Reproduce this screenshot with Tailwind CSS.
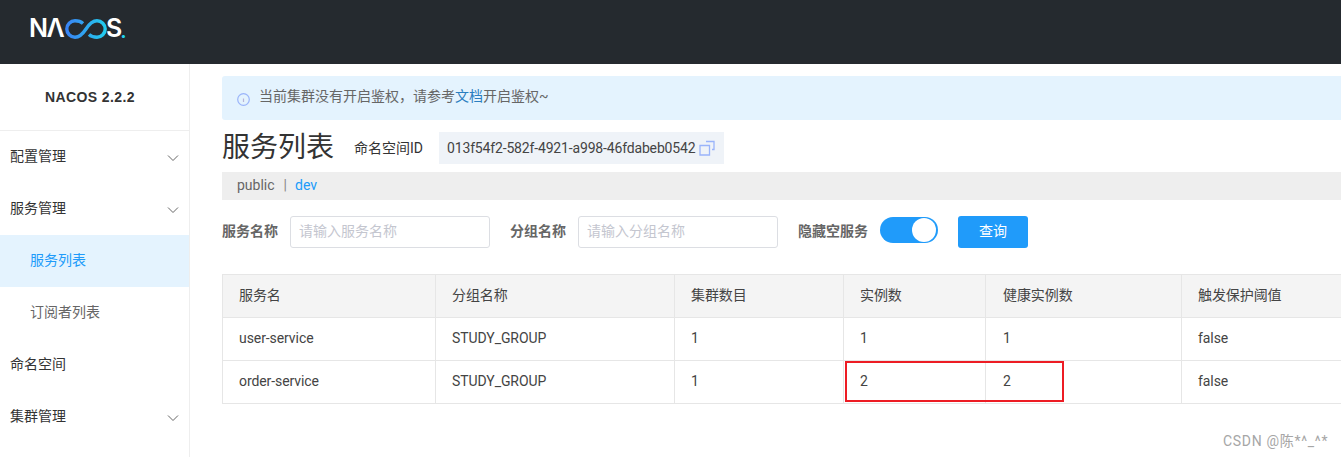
<!DOCTYPE html>
<html lang="zh-CN">
<head>
<meta charset="UTF-8" />
<title>Nacos</title>
<script src="https://cdn.jsdelivr.net/npm/@tailwindcss/browser@4"></script>
</head>
<body class="relative w-[1341px] h-[457px] overflow-hidden bg-white font-['Roboto','Noto_Sans_CJK_SC',sans-serif] text-[14px] text-[#333]">
  <!-- header -->
  <header class="h-16 bg-[#252a2f] flex items-center pl-[29px] pb-[7px]">
    <div class="flex items-center font-['Inter',sans-serif] font-semibold text-white text-[25px] leading-none" aria-label="NACOS">
      <span class="tracking-[-1.6px]">NΛ</span>
      <svg class="w-[44px] h-[20px] ml-[1px] -mr-[2px]" viewBox="0 0 44 20" fill="none">
        <defs>
          <linearGradient id="logoGrad" gradientUnits="userSpaceOnUse" x1="0" x2="44" y1="0" y2="0">
            <stop offset="0" stop-color="#3b7ff5" />
            <stop offset="0.5" stop-color="#2fa8f0" />
            <stop offset="1" stop-color="#1fd0ee" />
          </linearGradient>
        </defs>
        <path d="M19 4.500C17.200 2.800 14.500 1.800 11 1.800a8.200 8.200 0 0 0 0 16.400c4.800 0 7.600-3 11-8.200s6.200-8.200 11-8.200a8.200 8.200 0 0 1 0 16.400c-3.500 0-6.200-1-8-2.700" stroke="url(#logoGrad)" stroke-width="3.400" />
      </svg>
      <span>S</span>
      <span class="text-[#22d3ee] text-[20px] self-end -ml-[2px]">.</span>
    </div>
  </header>

  <div class="flex h-[393px]">
    <!-- sidebar -->
    <aside class="w-[190px] shrink-0 border-r border-[#eeeeee]">
      <div class="h-[67px] flex items-center justify-center pr-[9px] border-b border-[#eeeeee] font-bold text-[#333] tracking-[0.4px] font-['Liberation_Sans','Noto_Sans_CJK_SC',sans-serif]">NACOS 2.2.2</div>
      <nav>
        <div class="h-[52px] pl-2.5 pr-[10px] pb-[2px] flex items-center justify-between">
          <span>配置管理</span>
          <svg class="w-3 h-3 mt-1 text-[#666]" viewBox="0 0 12 12" fill="none" stroke="currentColor"><path d="M1 3.500 6 8.500l5-5" /></svg>
        </div>
        <div class="h-[52px] pl-2.5 pr-[10px] pb-[2px] flex items-center justify-between">
          <span>服务管理</span>
          <svg class="w-3 h-3 mt-1 text-[#666]" viewBox="0 0 12 12" fill="none" stroke="currentColor"><path d="M1 3.500 6 8.500l5-5" /></svg>
        </div>
        <div class="h-[52px] pl-[30px] pb-[2px] flex items-center bg-[#e4f3fe] text-[#209bfa]">服务列表</div>
        <div class="h-[52px] pl-[30px] pb-[2px] flex items-center text-[#666]">订阅者列表</div>
        <div class="h-[52px] pl-2.5 pb-[2px] flex items-center">命名空间</div>
        <div class="h-[52px] pl-2.5 pr-[10px] pb-[2px] flex items-center justify-between">
          <span>集群管理</span>
          <svg class="w-3 h-3 mt-1 text-[#666]" viewBox="0 0 12 12" fill="none" stroke="currentColor"><path d="M1 3.500 6 8.500l5-5" /></svg>
        </div>
      </nav>
    </aside>

    <!-- main -->
    <main class="flex-1 min-w-0 pl-8 pt-3">
      <div class="h-11 bg-[#e4f3fe] rounded-l-[3px] flex items-center pl-[15px] text-[#666]">
        <svg class="w-[13px] h-[13px] mr-[9px] mt-0.5 text-[#9ab4fa]" viewBox="0 0 13 13" fill="none" stroke="currentColor" stroke-width="1.200"><circle cx="6.500" cy="6.500" r="5.800" /><path d="M6.500 5.500v3.500" stroke="#b9b3d8" /></svg>
        <span class="pb-[3px]">当前集群没有开启鉴权，请参考<span class="text-[#2a7ec0]">文档</span>开启鉴权~</span>
      </div>

      <div class="flex items-center mt-3 h-8">
        <h1 class="text-[28px] leading-8 font-normal text-[#333]">服务列表</h1>
        <span class="ml-5 text-[#333]">命名空间ID</span>
        <div class="ml-4 h-8 w-[285px] bg-[#eff3f8] flex items-center pl-2 text-[#444]">
          <span class="tracking-[-0.16px]">013f54f2-582f-4921-a998-46fdabeb0542</span>
          <svg class="w-4 h-4 ml-1 -mt-[1px] text-[#9ab4fa]" viewBox="0 0 16 16" fill="none" stroke="currentColor" stroke-width="1.300"><path d="M1 5.500h9.500V15H1z" /><path d="M7 1.500h8v8h-2" /></svg>
        </div>
      </div>

      <div class="mt-2 h-7 pb-[2px] bg-[#eeeeee] flex items-center pl-[15px] text-[#666]">
        <span>public</span>
        <span class="mx-[9px] text-[#888]">|</span>
        <span class="text-[#209bfa] -ml-[1px]">dev</span>
      </div>

      <form class="mt-4 h-8 flex items-center">
        <label class="font-bold text-[#666] w-[68px] pb-[2px]">服务名称</label>
        <input class="w-[200px] h-8 border border-[#dcdee3] rounded-[3px] px-2 pb-[2px] text-[14px] placeholder:text-[#c4c6cf]" placeholder="请输入服务名称" />
        <label class="font-bold text-[#666] ml-5 w-[68px] pb-[2px]">分组名称</label>
        <input class="w-[200px] h-8 border border-[#dcdee3] rounded-[3px] px-2 pb-[2px] text-[14px] placeholder:text-[#c4c6cf]" placeholder="请输入分组名称" />
        <label class="font-bold text-[#666] ml-5 w-[82px] pb-[2px]">隐藏空服务</label>
        <div class="w-[58px] h-[26px] mb-1 rounded-full bg-[#209bfa] flex items-center justify-end pr-[2px]">
          <div class="w-6 h-6 rounded-full bg-white"></div>
        </div>
        <button type="button" class="ml-5 w-[70px] h-8 pb-[2px] rounded-[3px] bg-[#209bfa] text-white">查询</button>
      </form>

      <table class="mt-[26px] w-[1140px] table-fixed border-collapse text-[#444] tracking-[-0.08px]">
        <colgroup>
          <col class="w-[213px]" /><col class="w-[239px]" /><col class="w-[169px]" /><col class="w-[142px]" /><col class="w-[196px]" /><col class="w-[181px]" />
        </colgroup>
        <thead>
          <tr class="h-[43px] bg-[#f4f4f4]">
            <th class="border border-[#e6e6e6] pl-4 pb-[2px] text-left font-normal">服务名</th>
            <th class="border border-[#e6e6e6] pl-4 pb-[2px] text-left font-normal">分组名称</th>
            <th class="border border-[#e6e6e6] pl-4 pb-[2px] text-left font-normal">集群数目</th>
            <th class="border border-[#e6e6e6] pl-4 pb-[2px] text-left font-normal">实例数</th>
            <th class="border border-[#e6e6e6] pl-[17px] pb-[2px] text-left font-normal">健康实例数</th>
            <th class="border border-[#e6e6e6] pl-4 pb-[2px] text-left font-normal">触发保护阈值</th>
          </tr>
        </thead>
        <tbody>
          <tr class="h-[43px]">
            <td class="border border-[#e6e6e6] pl-4 pb-[2px]">user-service</td>
            <td class="border border-[#e6e6e6] pl-4 pb-[2px]">STUDY_GROUP</td>
            <td class="border border-[#e6e6e6] pl-4 pb-[2px]">1</td>
            <td class="border border-[#e6e6e6] pl-4 pb-[2px]">1</td>
            <td class="border border-[#e6e6e6] pl-[17px] pb-[2px]">1</td>
            <td class="border border-[#e6e6e6] pl-4 pb-[2px]">false</td>
          </tr>
          <tr class="h-[43px]">
            <td class="border border-[#e6e6e6] pl-4 pb-[2px]">order-service</td>
            <td class="border border-[#e6e6e6] pl-4 pb-[2px]">STUDY_GROUP</td>
            <td class="border border-[#e6e6e6] pl-4 pb-[2px]">1</td>
            <td class="border border-[#e6e6e6] pl-4 pb-[2px]">2</td>
            <td class="border border-[#e6e6e6] pl-[17px] pb-[2px]">2</td>
            <td class="border border-[#e6e6e6] pl-4 pb-[2px]">false</td>
          </tr>
        </tbody>
      </table>
    </main>
  </div>

  <!-- annotation drawn over the screenshot -->
  <div class="absolute left-[845px] top-[361px] w-[219px] h-[41px] border-2 border-[#ed1c24]"></div>
  <div class="absolute left-[1223px] top-[433px] text-[14px] leading-4 text-[#a6a6a6] tracking-[0.7px]">CSDN @陈*^_^*</div>
</body>
</html>
